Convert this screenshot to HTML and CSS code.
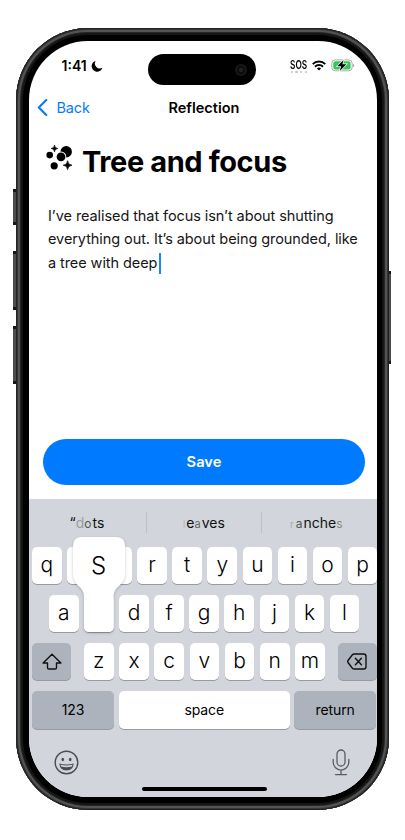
FILE: index.html
```
<!DOCTYPE html>
<html lang="en">
<head>
<meta charset="utf-8">
<title>Reflection</title>
<link rel="stylesheet" href="styles.css">
</head>
<body>
<div class="phone">
  <i class="side action"></i><i class="side up"></i><i class="side down"></i><i class="side power"></i>
  <main class="screen">
    <header class="status">
      <div class="clock"><span>1:41</span>
        <svg width="12" height="12" viewBox="0 0 12 12"><path d="M4.6.9A5.5 5.5 0 1 0 11.4 7.8 5 5 0 0 1 4.6.9Z"/></svg>
      </div>
      <div class="island"><i class="lens"></i></div>
      <div class="signals">
        <div class="sos"><span>SOS</span><div class="dots"><i></i><i></i><i></i><i></i></div></div>
        <svg class="wifi" width="14" height="11" viewBox="0 0 14 11"><g fill="none" stroke="#000" stroke-width="1.9"><path d="M.7 4.1a9 9 0 0 1 12.6 0"/><path d="M3 6.7a5.7 5.7 0 0 1 8 0"/></g><path d="M4.9 8.4a3.1 3.1 0 0 1 4.2 0L7 10.6Z"/></svg>
        <svg class="battery" width="24" height="13" viewBox="0 0 24 13"><rect x=".8" y=".9" width="20.4" height="10.9" rx="3.5" fill="#fff" stroke="#aaa"/><rect x="2.3" y="2.3" width="17.3" height="8.1" rx="2.2" fill="#34c759"/><path d="M22.2 5v3c1.3-.5 1.3-2.5 0-3Z" fill="#999"/><path d="M12.6.9 6.2 7.3h3.9L8.8 12l6.6-6.7h-4Z" stroke="#fff" stroke-width="1.4" paint-order="stroke"/></svg>
      </div>
    </header>
    <nav class="nav">
      <a class="back"><svg width="11" height="17" viewBox="0 0 11 17"><path d="M9.3 1 1.8 8.5l7.5 7.5" fill="none" stroke="#087bf8" stroke-width="2.1" stroke-linecap="round" stroke-linejoin="round"/></svg><span>Back</span></a>
      <b>Reflection</b>
    </nav>
    <section class="note">
      <div class="heading">
        <svg width="28" height="28" viewBox="0 0 28 28"><circle cx="20.2" cy="6.8" r="5.7"/><circle cx="15" cy="11.8" r="5.3" fill="#fff"/><circle cx="15" cy="11.8" r="4.4"/><circle cx="3.7" cy="10.1" r="3.3"/><circle cx="8.2" cy="20.8" r="3.6"/><path d="M8.5.1Q8.7 3.3 11.8 3.5 8.7 3.7 8.5 6.9 8.3 3.7 5.2 3.5 8.3 3.3 8.5.1ZM21.6 15.7Q21.9 19.9 26 20.2 21.9 20.5 21.6 24.7 21.3 20.5 17.2 20.2 21.3 19.9 21.6 15.7Z" stroke="#000" stroke-width=".7"/></svg>
        <h1>Tree and focus</h1>
      </div>
      <p>I’ve realised that focus isn’t about shutting<br>everything out. It’s about being grounded, like<br>a tree with deep<i class="caret"></i></p>
    </section>
    <button class="save">Save</button>
    <section class="keyboard">
      <div class="suggest">
        <div><span>“</span><span class="f2">d</span><span class="s1">o</span><span class="w1">ts</span></div>
        <div><span class="f3">l</span><span>e</span><span class="s2">a</span><span>ves</span></div>
        <div><span class="f4">r</span><span class="s3">a</span><span>nche</span><span class="f5">s</span></div>
      </div>
      <div class="row r1"><kbd>q</kbd><kbd></kbd><kbd></kbd><kbd>r</kbd><kbd>t</kbd><kbd>y</kbd><kbd>u</kbd><kbd>i</kbd><kbd>o</kbd><kbd>p</kbd></div>
      <div class="row r2"><kbd>a</kbd><kbd class="pressed"><svg width="62" height="104" viewBox="0 0 62 104"><path d="M14 4H48Q57 4 57 13V41Q57 47 52 52Q45.5 57 45.5 63V94Q45.5 99 40.5 99H21Q16 99 16 94V63Q16 57 9.5 52Q5 47 5 41V13Q5 4 14 4Z" fill="#fff"/></svg><span>S</span></kbd><kbd>d</kbd><kbd>f</kbd><kbd>g</kbd><kbd>h</kbd><kbd>j</kbd><kbd>k</kbd><kbd>l</kbd></div>
      <div class="row r3"><kbd class="gray shift"><svg width="20" height="18" viewBox="0 0 20 18"><path d="M10 1.3 1.1 10H5.5v4.7q0 1.3 1.3 1.3h6.4q1.3 0 1.3-1.3V10h4.4Z" fill="none" stroke="#111" stroke-width="1.4" stroke-linejoin="round"/></svg></kbd><div class="letters"><kbd>z</kbd><kbd>x</kbd><kbd>c</kbd><kbd>v</kbd><kbd>b</kbd><kbd>n</kbd><kbd>m</kbd></div><kbd class="gray delete"><svg width="20" height="17" viewBox="0 0 20 17"><path d="M7.2 1h9.5q2.3 0 2.3 2.3v10.4q0 2.3-2.3 2.3H7.2q-1 0-1.8-.8L1.2 9.8q-1-1.3 0-2.6L5.4 1.8Q6.2 1 7.2 1ZM8.4 5.3l6 6.4m0-6.4-6 6.4" fill="none" stroke="#111" stroke-width="1.4" stroke-linecap="round"/></svg></kbd></div>
      <div class="row r4"><kbd class="gray num">123</kbd><kbd class="space">space</kbd><kbd class="gray ret">return</kbd></div>
      <div class="tools">
        <svg width="25" height="25" viewBox="0 0 25 25"><circle cx="12.5" cy="12.5" r="11.3" fill="none" stroke="#4b4c51" stroke-width="1.4"/><ellipse cx="8.8" cy="9.5" rx="1.3" ry="1.7" fill="#4b4c51"/><ellipse cx="16.2" cy="9.5" rx="1.3" ry="1.7" fill="#4b4c51"/><path d="M5.2 13.5q7.3 2 14.6 0-.8 6.9-7.3 6.9t-7.3-6.9Z" fill="#4b4c51"/><path d="M6.5 14.8q6 1.4 12 0l-.6 1.7q-5.4 1.3-10.8 0Z" fill="#d2d5dc"/></svg>
        <svg width="18" height="27" viewBox="0 0 18 27"><g fill="none" stroke="#5b5c62" stroke-width="1.3" stroke-linecap="round"><rect x="5" y="1" width="8" height="16" rx="4"/><path d="M1.2 10.5v2.8a7.8 7.8 0 0 0 15.6 0v-2.8M9 21.2v4.3M3.5 25.6h11"/></g></svg>
      </div>
      <i class="home"></i>
    </section>
  </main>
</div>
</body>
</html>
```
FILE: styles.css
```
* { box-sizing: border-box; }
body { margin: 0; height: 840px; padding: 28px 0 0 16px; background: #fff; font-family: Inter, "Liberation Sans", sans-serif; color: #000; overflow: hidden; }
.phone { position: relative; width: 373px; height: 782px; padding: 13px 12.5px; border-radius: 72px; background: #000; box-shadow: inset 0 0 0 1px #222, inset 0 0 0 2px #353737, inset 0 0 0 4px #525454, inset 0 0 0 5px #252626, inset 0 0 0 7px #151515; }
.side { position: absolute; left: -3px; width: 3px; background: #4b4d4d; border: solid #171717; border-width: 3px 0; }
.action { top: 161px; height: 36px; }
.up { top: 223px; height: 59px; }
.down { top: 298px; height: 58px; }
.power { left: auto; right: -2px; width: 2px; top: 243px; height: 93px; }
.screen { display: flex; flex-direction: column; width: 348px; height: 756px; border-radius: 59px; overflow: hidden; background: #fff; }
.status { display: flex; height: 49px; padding: 13px 22px 0 33px; justify-content: space-between; }
.clock { display: flex; width: 86px; height: 23px; align-items: center; gap: 4.5px; font-weight: 600; font-size: 14px; }
.island { width: 108px; height: 31px; border-radius: 16px; background: #000; padding: 10px 9px; display: flex; justify-content: flex-end; }
.lens { width: 12px; height: 12px; border-radius: 50%; background: radial-gradient(#202020 20%, #080808 35%, #1a1a1a 60%, #090909); }
.signals { display: flex; width: 99px; height: 23px; align-items: center; justify-content: flex-end; }
.sos { width: 18px; margin-right: 4px; font-size: 12px; line-height: 11px; font-weight: 600; padding-top: 1px; }
.sos span { display: block; transform: scaleX(.69); transform-origin: left; width: 27px; }
.dots { display: flex; gap: 2.3px; padding: 1px 0 0 1px; }
.dots i { width: 2.4px; height: 2.4px; border-radius: 50%; background: #c4c4c4; }
.wifi { margin-right: 5px; }
.nav { display: flex; align-items: center; height: 35px; font-size: 14.5px; }
.back { display: flex; align-items: center; gap: 9px; padding-left: 8px; width: 140px; color: #087bf8; letter-spacing: -.15px; }
.nav b { font-weight: 600; font-size: 14.5px; white-space: nowrap; }
.note { height: 312.5px; flex: none; padding: 18.5px 0 0 17.5px; }
.heading { display: flex; height: 36px; align-items: flex-start; gap: 8px; }
.heading svg { margin-top: 1px; }
h1 { margin: 0; font-size: 29px; line-height: 35px; font-weight: 700; letter-spacing: -.4px; white-space: nowrap; }
p { margin: 24.6px 0 0 2px; font-size: 14.5px; line-height: 23.3px; letter-spacing: -.08px; color: #161616; white-space: nowrap; }
.caret { display: inline-block; width: 2px; height: 21px; margin-left: 2px; vertical-align: -6px; background: #2383f8; }
.save { width: 322px; height: 46.5px; flex: none; margin: 1px 0 0 14.5px; border: 0; border-radius: 23.5px; background: #007aff; color: #fff; font: 600 14.7px Inter, sans-serif; }
.keyboard { position: relative; margin-top: 14px; height: 298px; flex: none; background: #d2d5dc; }
.suggest { display: flex; height: 47.5px; padding-top: 13px; }
.suggest > div { width: 117px; height: 21px; display: flex; align-items: baseline; justify-content: center; line-height: 21px; font-size: 14px; color: #111; }
.suggest > div + div { border-left: 1px solid #bdc0c6; }
.suggest .f2 { color: #9b9da2; } .suggest .s1 { font-size: 12px; color: #555; } .suggest .w1 { margin-left: 1px; }
.suggest .f3 { color: #b8babf; font-size: 11px; margin-right: 1px; } .suggest .s2 { font-size: 11px; color: #666; margin-right: 1px; }
.suggest .f4 { font-size: 10px; color: #aaa; margin-right: 2px; } .suggest .s3 { font-size: 12px; color: #555; margin-right: 1px; } .suggest .f5 { font-size: 12px; color: #888; }
.suggest > div:first-child { flex: none; }
.suggest > div:last-child { padding-right: 6px; }
.row { display: flex; height: 37.5px; margin-bottom: 10.7px; gap: 5.5px; padding-left: 3.5px; }
.r2 { padding-left: 20.5px; }
kbd { display: flex; flex: none; align-items: center; justify-content: center; position: relative; width: 29.6px; height: 37.5px; padding-bottom: 1.5px; border-radius: 5px; background: #fff; box-shadow: 0 1px 0 #989a9f; font: 300 21px Inter, sans-serif; color: #000; }
.pressed { z-index: 2; }
.pressed svg { position: absolute; left: -16px; top: -61.5px; filter: drop-shadow(0 1px 1.5px #0003); }
.pressed span { position: absolute; top: -43.5px; left: 0; width: 29px; text-align: center; font-size: 24px; line-height: 30px; font-weight: 350; }
.gray { background: #acb3bc; }
.shift, .delete { width: 39px; padding: 0; }
.r3 { gap: 13px; }
.letters { display: flex; gap: 5.6px; }
.r4 { gap: 4.7px; }
.r4 kbd { font-size: 14px; font-weight: 400; padding-bottom: 1px; letter-spacing: -.1px; }
.num { width: 82px; }
.space { width: 171px; }
.ret { width: 81.5px; }
.tools { display: flex; justify-content: space-between; align-items: center; padding: 9.5px 26.5px 0 25.5px; }
.home { position: absolute; left: 113.5px; bottom: 6px; width: 125px; height: 4px; border-radius: 2px; background: #000; }
```
